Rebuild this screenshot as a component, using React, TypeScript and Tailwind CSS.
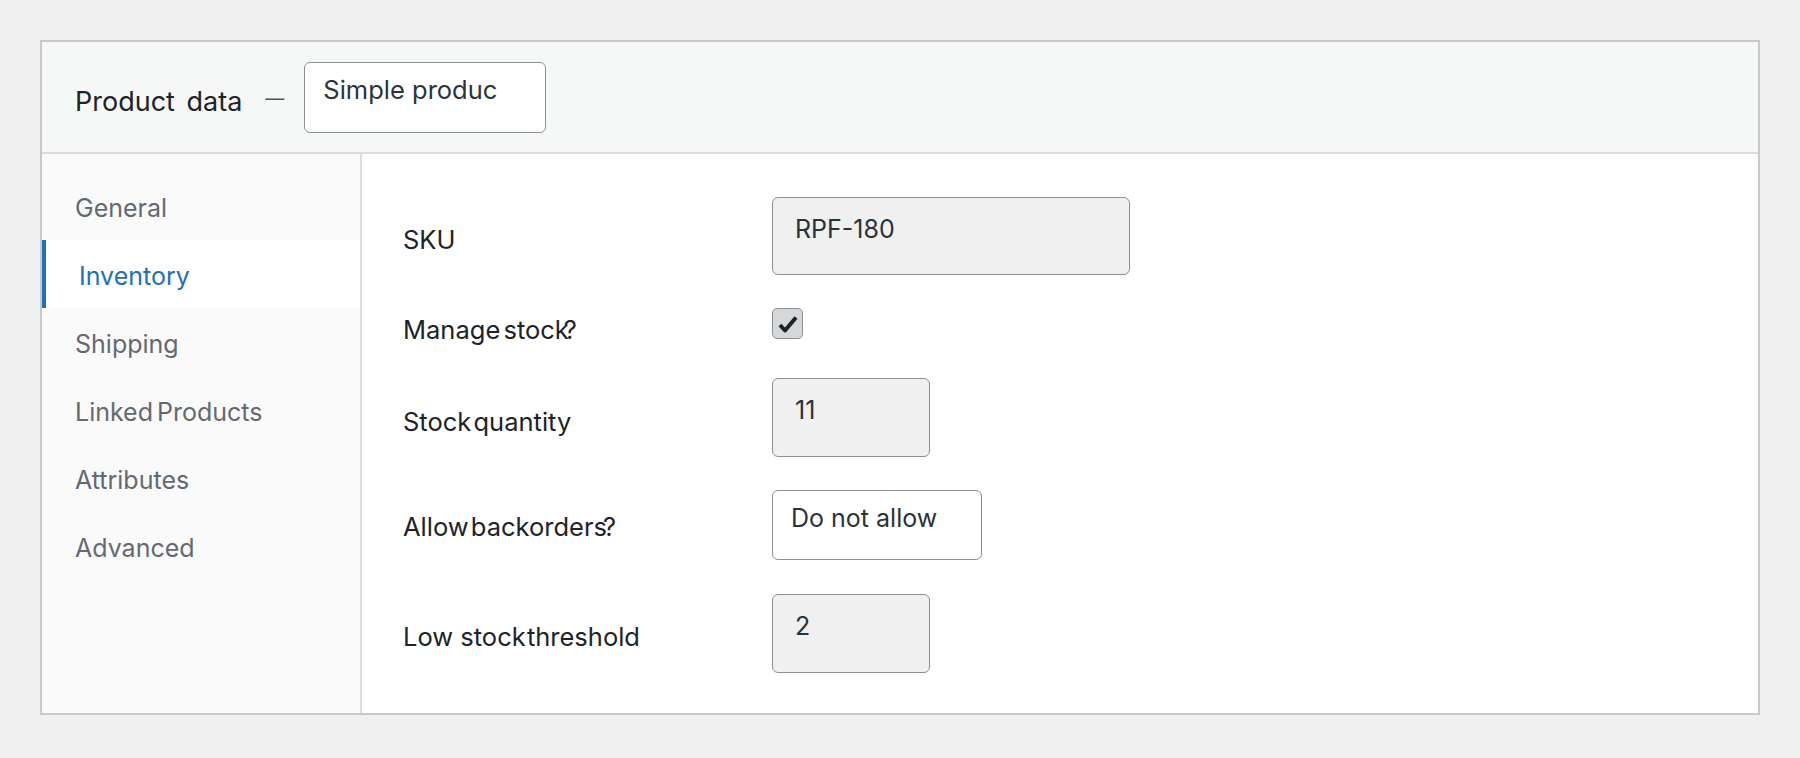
const tabs = ["General", "Inventory", "Shipping", "Linked Products", "Attributes", "Advanced"];

const Field = ({ label, children, shift = "translate-y-[4px]" }: { label: React.ReactNode; children: React.ReactNode; shift?: string }) => (
  <div className="flex items-center">
    <label className={`w-[369px] text-[25.5px] leading-[30px] text-[#1d2327] ${shift}`}>{label}</label>
    {children}
  </div>
);

const TextBox = ({ value, width }: { value: string; width: string }) => (
  <div className={`${width} h-[79px] rounded-[6px] border border-[#8c8f94] bg-[#f0f0f1] pl-[22px] pt-[16px] text-[25px] leading-[30px] text-[#2c3338]`}>
    {value}
  </div>
);

export default function App() {
  return (
    <div className="min-h-screen bg-[#f0f0f1] px-10 pt-10 font-['Inter',sans-serif]">
      <div className="border-2 border-[#c8c9cb] bg-white">
        <div className="flex h-[112px] items-center border-b-2 border-[#dcdcde] bg-[#f6f7f7] pl-[33px]">
          <h2 className="mt-[9px] text-[27px] leading-[30px] text-[#1d2327] [word-spacing:4px]">Product data</h2>
          <span className="ml-[23px] mt-[4px] text-[19px] text-[#50575e]">—</span>
          <div className="ml-[20px] h-[71px] w-[242px] rounded-[6px] border border-[#8c8f94] bg-white pl-[18px] pt-[12px] text-[25.5px] leading-[30px] text-[#2c3338]">
            Simple produc
          </div>
        </div>

        <div className="flex">
          <ul className="w-[320px] border-r-2 border-[#dcdcde] bg-[#fafafa] pt-[18px]">
            {tabs.map((tab) => (
              <li
                key={tab}
                className={
                  tab === "Inventory"
                    ? "flex h-[68px] items-center border-l-4 border-[#2271b1] bg-white pl-[33px] pt-[6px] text-[25px] text-[#2271b1]"
                    : "flex h-[68px] items-center pl-[33px] pt-[6px] text-[25px] text-[#646970] [word-spacing:-3px]"
                }
              >
                {tab}
              </li>
            ))}
          </ul>

          <div className="flex flex-1 flex-col pb-[40px] pl-[41px] pt-[43px]">
            <Field label="SKU">
              <div className="h-[78px] w-[358px] rounded-[6px] border border-[#8c8f94] bg-[#f0f0f1] pl-[22px] pt-[16px] text-[25px] leading-[30px] text-[#2c3338]">
                RPF-180
              </div>
            </Field>

            <div className="mt-[33px]">
              <Field
                shift="translate-y-[6px]"
                label={
                  <>
                    <span className="[word-spacing:-4px]">Manage stock</span>
                    <span className="-ml-[5px]">?</span>
                  </>
                }
              >
                <div className="flex h-[31px] w-[31px] items-center justify-center rounded-[5px] border border-[#8c8f94] bg-[#d6d7d8]">
                  <svg width="22" height="20" viewBox="0 0 22 20">
                    <polyline points="3,11 8,16.5 19,3.5" fill="none" stroke="#1d2327" strokeWidth="4" strokeLinejoin="round" />
                  </svg>
                </div>
              </Field>
            </div>

            <div className="mt-[39px]">
              <Field label={<span className="[word-spacing:-5px]">Stock quantity</span>}>
                <TextBox value="11" width="w-[158px]" />
              </Field>
            </div>

            <div className="mt-[33px]">
              <Field
                shift="translate-y-[2px]"
                label={
                  <>
                    <span className="[word-spacing:-5px]">Allow backorders</span>
                    <span className="-ml-[4px]">?</span>
                  </>
                }
              >
                <div className="h-[70px] w-[210px] rounded-[6px] border border-[#8c8f94] bg-white pl-[18px] pt-[12px] text-[25px] leading-[30px] text-[#2c3338]">
                  Do not allow
                </div>
              </Field>
            </div>

            <div className="mt-[34px]">
              <Field
                shift="translate-y-[3px]"
                label={
                  <>
                    Low stock<span className="[word-spacing:-6px]"> threshold</span>
                  </>
                }
              >
                <TextBox value="2" width="w-[158px]" />
              </Field>
            </div>
          </div>
        </div>
      </div>
    </div>
  );
}
